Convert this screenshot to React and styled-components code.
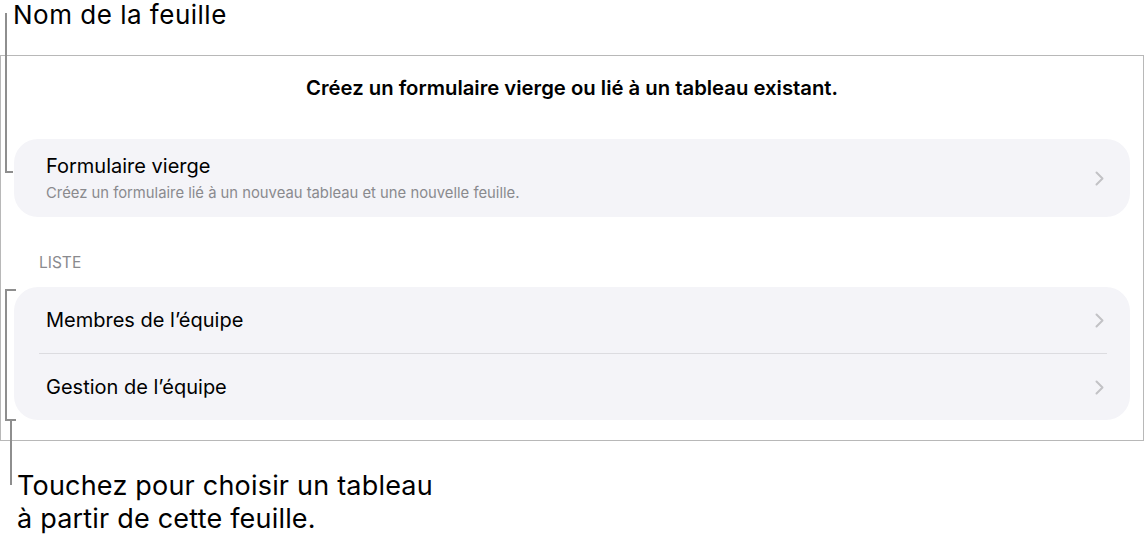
import React from "react";
import styled, { createGlobalStyle } from "styled-components";

const GlobalStyle = createGlobalStyle`
  body {
    margin: 0;
    background: #ffffff;
    font-family: Inter, "Liberation Sans", sans-serif;
    color: #000000;
  }
`;

function Chevron() {
  return (
    <svg width="9" height="15" viewBox="0 0 9 15" fill="none">
      <polyline
        points="1.5,1.5 7.5,7.5 1.5,13.5"
        stroke="#c2c2c6"
        strokeWidth="2"
        strokeLinecap="round"
        strokeLinejoin="round"
      />
    </svg>
  );
}

function App() {
  return (
    <Page>
      <GlobalStyle />
      <TopNote>Nom de la feuille</TopNote>
      <Frame>
        <Heading>Créez un formulaire vierge ou lié à un tableau existant.</Heading>
        <Card>
          <Row tall>
            <RowText>
              <RowTitle>Formulaire vierge</RowTitle>
              <RowSub>
                Créez un formulaire lié à un nouveau tableau et une nouvelle
                feuille.
              </RowSub>
            </RowText>
            <Chevron />
          </Row>
        </Card>
        <SectionLabel>LISTE</SectionLabel>
        <Card>
          <Row>
            <RowTitle>Membres de l’équipe</RowTitle>
            <Chevron />
          </Row>
          <Divider />
          <Row>
            <RowTitle>Gestion de l’équipe</RowTitle>
            <Chevron />
          </Row>
        </Card>
      </Frame>
      <BottomNote>
        Touchez pour choisir un tableau
        <br />à partir de cette feuille.
      </BottomNote>

      {/* leader lines drawn over the screenshot */}
      <Line style={{ left: 5, top: 13, width: 2, height: 160 }} />
      <Line style={{ left: 5, top: 171, width: 8, height: 2 }} />
      <Line style={{ left: 5, top: 289, width: 2, height: 132 }} />
      <Line style={{ left: 5, top: 289, width: 11, height: 2 }} />
      <Line style={{ left: 5, top: 419, width: 11, height: 2 }} />
      <Line style={{ left: 10, top: 420, width: 2, height: 65 }} />
    </Page>
  );
}

const Page = styled.div`
  position: relative;
  width: 1144px;
  height: 537px;
  overflow: hidden;
`;

const TopNote = styled.div`
  height: 55px;
  padding-left: 13px;
  font-size: 26px;
  letter-spacing: 0.5px;
  line-height: 30px;
  box-sizing: border-box;
`;

const Frame = styled.div`
  box-sizing: border-box;
  width: 1144px;
  height: 386px;
  border: 1px solid #b8b8b8;
  padding: 0 13px;
  display: flex;
  flex-direction: column;
`;

const Heading = styled.div`
  text-align: center;
  font-size: 20.3px;
  font-weight: 600;
  line-height: 24px;
  margin-top: 20px;
  margin-bottom: 39px;
`;

const Card = styled.div`
  background: #f4f4f8;
  border-radius: 24px;
  display: flex;
  flex-direction: column;
`;

const Row = styled.div`
  display: flex;
  align-items: center;
  justify-content: space-between;
  height: ${(p) => (p.tall ? "78px" : "66px")};
  padding: 0 26px 0 32px;
`;

const RowText = styled.div`
  display: flex;
  flex-direction: column;
  gap: 6px;
`;

const RowTitle = styled.div`
  font-size: 20px;
  line-height: 24px;
  color: #000000;
`;

const RowSub = styled.div`
  font-size: 14.8px;
  line-height: 18px;
  color: #8a8a8e;
`;

const Divider = styled.div`
  height: 1px;
  background: #dcdce0;
  margin: 0 23px 0 25px;
`;

const SectionLabel = styled.div`
  font-size: 15.5px;
  line-height: 18px;
  color: #8a8a8e;
  margin: 37px 0 15px 25px;
`;

const BottomNote = styled.div`
  padding-left: 17px;
  margin-top: 28px;
  font-size: 27px;
  letter-spacing: 0.2px;
  line-height: 33px;
`;

const Line = styled.div`
  position: absolute;
  background: #8e8e8e;
`;

export default App;
